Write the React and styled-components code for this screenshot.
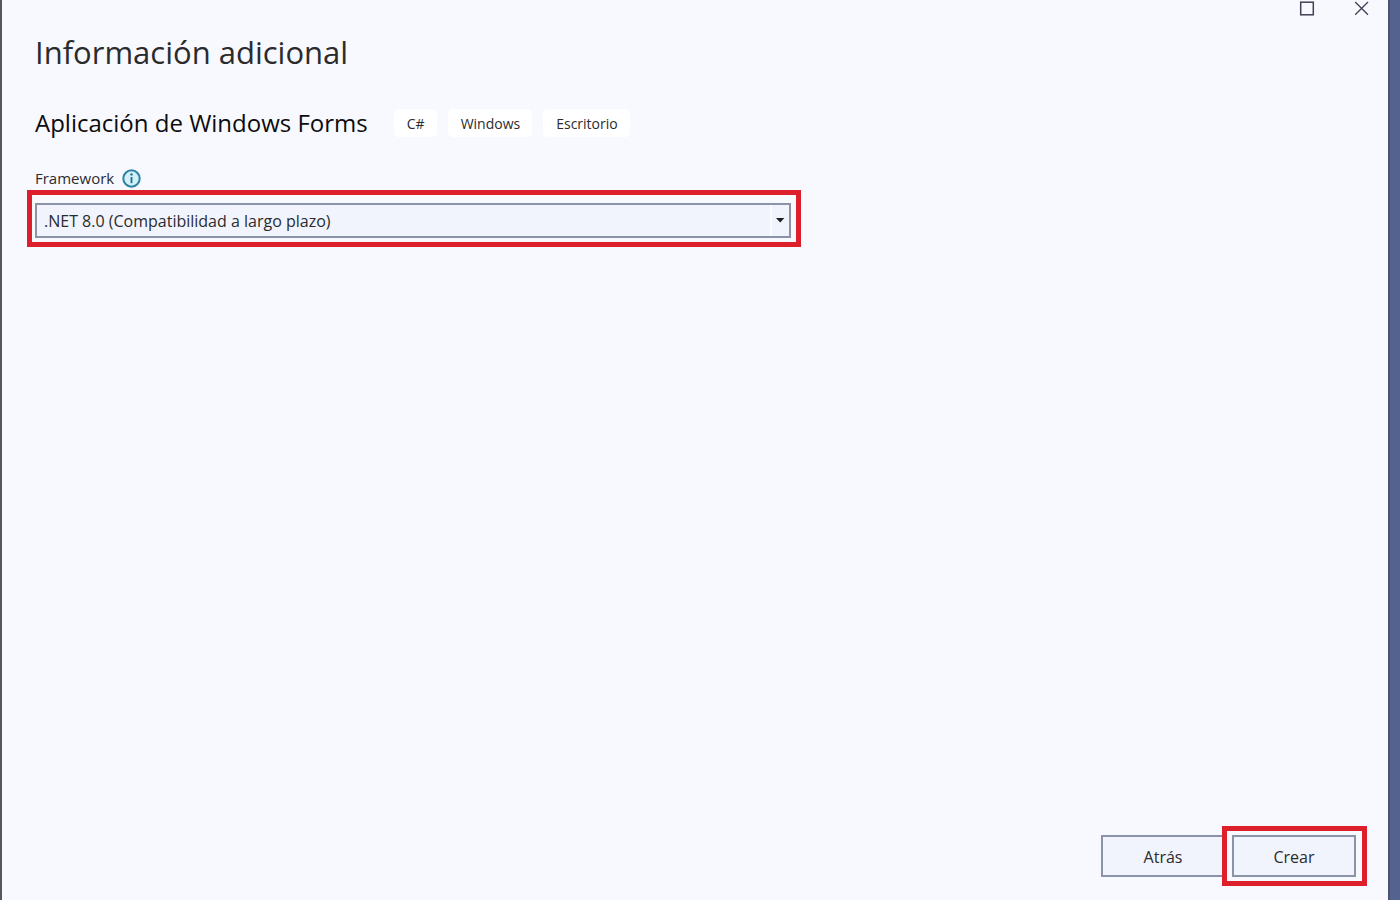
import React, { useState } from "react";
import styled, { createGlobalStyle } from "styled-components";

const GlobalStyle = createGlobalStyle`
  * {
    box-sizing: border-box;
  }

  body {
    margin: 0;
    background-color: #54628f;
    color: #2b2b2e;
    font-family: "Segoe UI", "Open Sans", "Noto Sans", sans-serif;
  }
`;

const Window = styled.div`
  display: flex;
  flex-direction: column;
  min-height: 100vh;
  margin-right: 10px;
  border-left: 2px solid #56575c;
  border-right: 2px solid #4b5270;
  background-color: #f8f9fe;
`;

const TitleBar = styled.header`
  display: flex;
  justify-content: flex-end;
  gap: 35px;
  height: 24px;
  padding-right: 16px;
`;

const CaptionButton = styled.button`
  display: flex;
  justify-content: center;
  width: 20px;
  height: 18px;
  padding: 0;
  border: none;
  background: none;
  color: #3f4254;
`;

const Content = styled.main`
  flex: 1;
  padding: 0 33px;
`;

const Title = styled.h1`
  margin: 0;
  font-size: 31px;
  font-weight: 400;
  line-height: 56px;
`;

const Project = styled.div`
  display: flex;
  align-items: center;
  gap: 26px;
  margin-top: 23px;
`;

const ProjectName = styled.h2`
  margin: 0;
  color: #0c0c0e;
  font-size: 24px;
  font-weight: 400;
  line-height: 40px;
`;

const Tags = styled.ul`
  display: flex;
  gap: 11px;
  margin: 0;
  padding: 0;
  list-style: none;
`;

const Tag = styled.li`
  padding: 1px 12px 0 13px;
  border-radius: 5px;
  background-color: #fff;
  font-size: 14px;
  line-height: 27px;
`;

const LabelRow = styled.div`
  display: flex;
  align-items: center;
  gap: 8px;
  margin-top: 23px;
`;

const Label = styled.label`
  font-size: 15px;
  line-height: 24px;
`;

const Highlight = styled.div`
  padding: ${(props) => props.$padding};
  border: 5px solid #dc1f2b;
`;

const FieldHighlight = styled(Highlight)`
  max-width: 774px;
  margin-left: -8px;
`;

const SelectBox = styled.div`
  position: relative;
`;

const Select = styled.select`
  display: block;
  width: 100%;
  height: 35px;
  padding: 0 26px 0 7px;
  appearance: none;
  border: 2px solid #8b93a7;
  border-radius: 0;
  background-color: #f1f4fc;
  color: #2b2b2e;
  font-family: inherit;
  font-size: 16px;
`;

const Arrow = styled.span`
  position: absolute;
  top: 2px;
  right: 2px;
  bottom: 2px;
  display: flex;
  align-items: center;
  justify-content: center;
  width: 19px;
  border-left: 2px solid #fafbff;
  pointer-events: none;
`;

const Footer = styled.footer`
  display: flex;
  align-items: center;
  justify-content: flex-end;
  padding: 0 21px 14px;
`;

const Button = styled.button`
  display: block;
  width: 124px;
  height: 42px;
  padding: 2px 6px 0;
  border: 2px solid #8b93a7;
  background-color: #f1f4fc;
  color: #2b2b2e;
  font-family: inherit;
  font-size: 16px;
`;

const BackButton = styled(Button)`
  margin-right: -3px;
`;

const ButtonHighlight = styled(Highlight)`
  position: relative;
  background-color: #f8f9fe;
`;

const MaximizeIcon = () => (
  <svg width="16" height="17" viewBox="0 0 16 17" aria-hidden="true">
    <rect
      x="1.7"
      y="2.2"
      width="12.6"
      height="12.6"
      fill="none"
      stroke="currentColor"
      strokeWidth="1.5"
    />
  </svg>
);

const CloseIcon = () => (
  <svg width="16" height="17" viewBox="0 0 16 17" aria-hidden="true">
    <path
      d="M1.2 2 14 14.8M14 2 1.2 14.8"
      fill="none"
      stroke="currentColor"
      strokeWidth="1.3"
    />
  </svg>
);

const InfoIcon = () => (
  <svg width="19" height="19" viewBox="0 0 19 19" role="img" aria-label="Info">
    <circle
      cx="9.5"
      cy="9.5"
      r="8.2"
      fill="#d3f0f8"
      stroke="#2b83a3"
      strokeWidth="2"
    />
    <circle cx="9.5" cy="5.4" r="1.2" fill="#1d6f90" />
    <path d="M9.5 8v6.2" stroke="#1d6f90" strokeWidth="1.8" />
  </svg>
);

const tags = ["C#", "Windows", "Escritorio"];

const frameworks = [".NET 8.0 (Compatibilidad a largo plazo)"];

const App = () => {
  const [framework, setFramework] = useState(frameworks[0]);

  return (
    <>
      <GlobalStyle />
      <Window>
        <TitleBar>
          <CaptionButton type="button" aria-label="Maximizar">
            <MaximizeIcon />
          </CaptionButton>
          <CaptionButton type="button" aria-label="Cerrar">
            <CloseIcon />
          </CaptionButton>
        </TitleBar>
        <Content>
          <Title>Información adicional</Title>
          <Project>
            <ProjectName>Aplicación de Windows Forms</ProjectName>
            <Tags>
              {tags.map((tag) => (
                <Tag key={tag}>{tag}</Tag>
              ))}
            </Tags>
          </Project>
          <LabelRow>
            <Label htmlFor="framework">Framework</Label>
            <InfoIcon />
          </LabelRow>
          <FieldHighlight $padding="8px 5px 4px 3px">
            <SelectBox>
              <Select
                id="framework"
                value={framework}
                onChange={(event) => setFramework(event.target.value)}
              >
                {frameworks.map((name) => (
                  <option key={name}>{name}</option>
                ))}
              </Select>
              <Arrow>
                <svg width="9" height="5" viewBox="0 0 9 5" aria-hidden="true">
                  <path d="M0 0h8.4L4.2 4.6z" fill="#1e1e1e" />
                </svg>
              </Arrow>
            </SelectBox>
          </FieldHighlight>
        </Content>
        <Footer>
          <BackButton type="button">Atrás</BackButton>
          <ButtonHighlight $padding="4px 6px 4px 5px">
            <Button type="button">Crear</Button>
          </ButtonHighlight>
        </Footer>
      </Window>
    </>
  );
};

export default App;
